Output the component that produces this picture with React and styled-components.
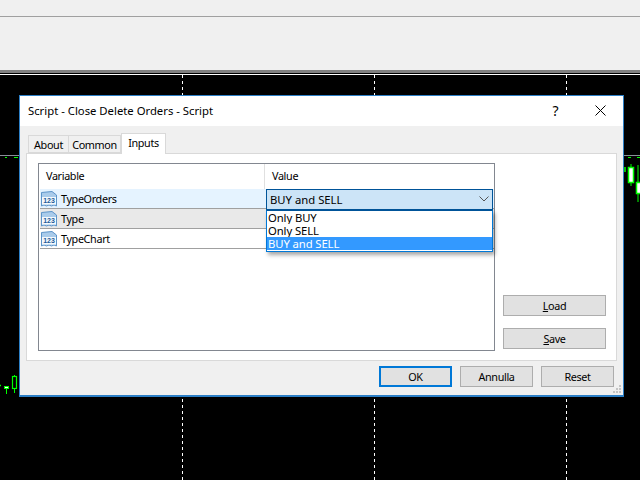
import React from 'react';
import styled, { createGlobalStyle, css } from 'styled-components';

const GlobalStyle = createGlobalStyle`
  html, body {
    margin: 0;
    padding: 0;
    width: 640px;
    height: 480px;
    overflow: hidden;
    background: #000;
  }
  body {
    font-family: "Noto Sans", "Open Sans", sans-serif;
    font-size: 11.3px;
    color: #000;
  }
`;

// most labels in the dialog run narrower than the title
const compact = css`
  font-size: 10.8px;
  letter-spacing: -0.35px;
`;

const Page = styled.div`
  position: relative;
  width: 640px;
  height: 480px;
  display: flex;
  flex-direction: column;
  background: #000;
`;

const MenuStrip = styled.div`
  height: 16px;
  background: #f0f0f0;
  border-bottom: 1px solid #a0a0a0;
`;

const ToolStrip = styled.div`
  height: 53px;
  background: #f0f0f0;
  border-bottom: 3px solid #808080;
`;

const Chart = styled.svg`
  display: block;
  flex: 1;
  width: 640px;
`;

const Dialog = styled.div`
  position: absolute;
  left: 19px;
  top: 95px;
  width: 605px;
  height: 302px;
  box-sizing: border-box;
  border: 1px solid #2c7fc6;
  border-bottom-width: 2px;
  display: flex;
  flex-direction: column;
  background: #f0f0f0;
`;

const TitleBar = styled.div`
  box-sizing: border-box;
  height: 30px;
  flex: none;
  display: flex;
  align-items: center;
  background: #fff;
  padding: 0 0 2px 8px;
`;

const Title = styled.span`
  flex: 1;
`;

const TitleButton = styled.div`
  width: 45px;
  display: flex;
  align-items: center;
  justify-content: center;
  font-size: 14px;
`;

const Body = styled.div`
  flex: 1;
  display: flex;
  flex-direction: column;
  padding: 7px 6px 0;
`;

const Tabs = styled.div`
  display: flex;
  align-items: flex-end;
  height: 20px;
  padding-left: 2px;
`;

const Tab = styled.div`
  ${compact}
  box-sizing: border-box;
  height: ${(p) => (p.$active ? '21px' : '18px')};
  width: ${(p) => p.$width}px;
  margin-bottom: ${(p) => (p.$active ? '-1px' : '0')};
  padding-bottom: ${(p) => (p.$active ? '3px' : '0')};
  background: ${(p) => (p.$active ? '#fff' : '#f0f0f0')};
  border: 1px solid #d9d9d9;
  border-bottom: ${(p) => (p.$active ? 'none' : '1px solid #d9d9d9')};
  border-left-width: ${(p) => (p.$first || p.$active ? '1px' : '0')};
  display: flex;
  align-items: center;
  justify-content: center;
  position: relative;
`;

const Panel = styled.div`
  box-sizing: border-box;
  height: 208px;
  display: flex;
  gap: 8px;
  padding: 9px 10px 9px 11px;
  background: #fff;
  border: 1px solid #d9d9d9;
`;

const PropertyGrid = styled.div`
  position: relative;
  box-sizing: border-box;
  width: 457px;
  border: 1px solid #828790;
  display: flex;
  flex-direction: column;
`;

const GridHeader = styled.div`
  height: 25px;
  display: grid;
  grid-template-columns: 226px 1fr;
`;

const HeaderCell = styled.div`
  ${compact}
  display: flex;
  align-items: center;
  padding: 0 0 2px 7px;
  border-right: ${(p) => (p.$divider ? '1px solid #e0e0e0' : 'none')};
`;

const Row = styled.div`
  ${compact}
  box-sizing: border-box;
  height: 20px;
  margin-left: 1px;
  display: flex;
  align-items: center;
  gap: 4px;
  padding-left: 1px;
  background: ${(p) => p.$bg};
  border-bottom: 1px solid #a0a0a0;
`;

const Combo = styled.div`
  position: absolute;
  left: 227px;
  top: 25px;
  width: 227px;
  height: 21px;
  box-sizing: border-box;
  display: flex;
  align-items: center;
  justify-content: space-between;
  padding: 0 3px 1px 3px;
  background: #cce4f7;
  border: 1px solid #005499;
`;

const DropList = styled.div`
  position: absolute;
  left: 227px;
  top: 46px;
  width: 227px;
  box-sizing: border-box;
  padding-bottom: 1px;
  background: #fff;
  border: 1px solid #0078d7;
  border-top-color: #005499;
  box-shadow: 2px 3px 4px rgba(0, 0, 0, 0.35);
`;

const DropItem = styled.div`
  height: 13px;
  line-height: 13px;
  padding-left: 1px;
  letter-spacing: -0.1px;
  white-space: nowrap;
  overflow: hidden;
  background: ${(p) => (p.$selected ? '#3399ff' : 'transparent')};
  color: ${(p) => (p.$selected ? '#fff' : '#000')};
`;

const SideButtons = styled.div`
  flex: 1;
  display: flex;
  flex-direction: column;
  justify-content: flex-end;
  gap: 12px;
  padding-bottom: 2px;
`;

const Button = styled.div`
  ${compact}
  box-sizing: border-box;
  width: ${(p) => p.$width || 73}px;
  height: 21px;
  display: flex;
  align-items: center;
  justify-content: center;
  background: #e1e1e1;
  border: ${(p) => (p.$focused ? '2px solid #0078d7' : '1px solid #adadad')};
  u {
    text-underline-offset: 1px;
  }
`;

const Footer = styled.div`
  position: relative;
  flex: 1;
  display: flex;
  justify-content: flex-end;
  align-items: flex-start;
  gap: 8px;
  padding: 5px 3px 0 0;
`;

const Grip = styled.svg`
  position: absolute;
  right: -5px;
  bottom: 1px;
`;

const VarIcon = () => (
  <svg width="16" height="16" viewBox="0 0 16 16">
    <path d="M0.5 1.5 L11 0.5 L15.5 4 V15 L13 14 L10.5 15 L8 14 L5.5 15 L3 14 L0.5 15 Z" fill="#a9cbea" stroke="#5d94c9" />
    <rect x="1" y="6" width="14" height="7.5" fill="#f4f9fd" />
    <text x="8" y="12.3" textAnchor="middle" fontSize="7" fontWeight="700" fontFamily="Liberation Sans" letterSpacing="0" fill="#1d5c9a">123</text>
  </svg>
);

const App = () => (
  <Page>
    <GlobalStyle />
    <MenuStrip />
    <ToolStrip />
    <Chart viewBox="0 73 640 407">
      <line x1="0" x2="640" y1="74.5" y2="74.5" stroke="#fff" />
      {[182.5, 374.5, 566.5].map((x) => (
        <line key={x} x1={x} x2={x} y1="75" y2="480" stroke="#fff" strokeDasharray="3 3" />
      ))}
      <line x1="0" x2="640" y1="155.5" y2="155.5" stroke="#8a9099" />
      <g stroke="#00ff00" fill="none">
        <path d="M5 157.5H7M14 157.5H18M628 157.5H631M637 157.5H640" />
        <path d="M625 167V172" strokeWidth="1.5" />
        <path d="M631 164V168M631 183V186" />
        <rect x="628.5" y="167.5" width="5" height="15" fill="#fff" strokeWidth="1.5" />
        <path d="M638 165V182M638 194V202" />
        <rect x="636.5" y="182.5" width="6" height="11" fill="#fff" strokeWidth="1.5" />
        <path d="M0 385.5H1" strokeWidth="1.5" />
        <rect x="4.5" y="386.5" width="4" height="2" fill="#fff" />
        <path d="M6.5 389V394" />
        <rect x="12.5" y="376.5" width="4" height="12" strokeWidth="1.2" />
        <path d="M14.5 375V377M14.5 389V393" />
      </g>
    </Chart>
    <Dialog>
      <TitleBar>
        <Title>Script - Close Delete Orders - Script</Title>
        <TitleButton>?</TitleButton>
        <TitleButton>
          <svg width="11" height="11" viewBox="0 0 11 11">
            <path d="M0.5 0.5L10.5 10.5M10.5 0.5L0.5 10.5" stroke="#000" fill="none" />
          </svg>
        </TitleButton>
      </TitleBar>
      <Body>
        <Tabs>
          <Tab $first $width={41}>About</Tab>
          <Tab $width={52}>Common</Tab>
          <Tab $active $width={45}>Inputs</Tab>
        </Tabs>
        <Panel>
          <PropertyGrid>
            <GridHeader>
              <HeaderCell $divider>Variable</HeaderCell>
              <HeaderCell>Value</HeaderCell>
            </GridHeader>
            <Row $bg="#e5f3ff"><VarIcon />TypeOrders</Row>
            <Row $bg="#e9e9e9"><VarIcon />Type</Row>
            <Row $bg="#fff"><VarIcon />TypeChart</Row>
            <Combo>
              BUY and SELL
              <svg width="10" height="6" viewBox="0 0 10 6">
                <path d="M0.5 0.5L5 5L9.5 0.5" stroke="#555" fill="none" />
              </svg>
            </Combo>
            <DropList>
              <DropItem>Only BUY</DropItem>
              <DropItem>Only SELL</DropItem>
              <DropItem $selected>BUY and SELL</DropItem>
            </DropList>
          </PropertyGrid>
          <SideButtons>
            <Button $width={103}><span><u>L</u>oad</span></Button>
            <Button $width={103}><span><u>S</u>ave</span></Button>
          </SideButtons>
        </Panel>
        <Footer>
          <Button $focused>OK</Button>
          <Button>Annulla</Button>
          <Button>Reset</Button>
          <Grip width="9" height="9" viewBox="0 0 9 9">
            <path d="M6 0h2v2H6zM3 3h2v2H3zM6 3h2v2H6zM0 6h2v2H0zM3 6h2v2H3zM6 6h2v2H6z" fill="#c4c4c4" />
          </Grip>
        </Footer>
      </Body>
    </Dialog>
  </Page>
);

export default App;
